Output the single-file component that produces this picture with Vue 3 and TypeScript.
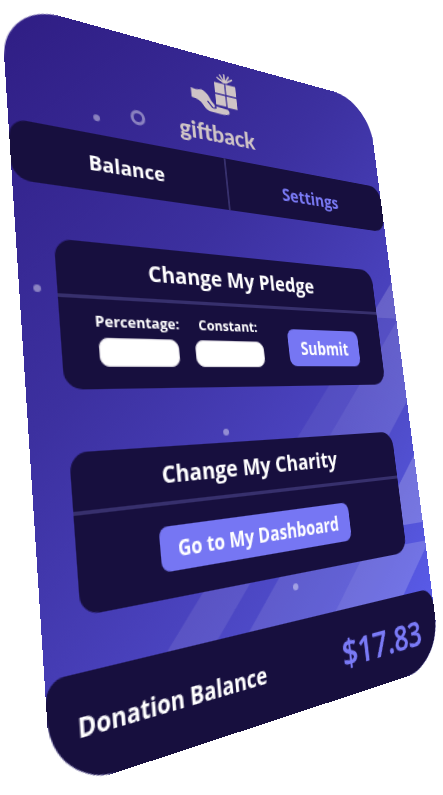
<script setup lang="ts">
import { ref } from 'vue'

type Tab = 'Balance' | 'Settings'

const tabs: Tab[] = ['Balance', 'Settings']
const current = ref<Tab>('Balance')
const percentage = ref('')
const constant = ref('')
const balance = ref(17.83)
</script>

<template>
  <div class="stage">
    <main class="card">
      <svg class="scenery" viewBox="0 0 400 606" preserveAspectRatio="none" aria-hidden="true">
        <defs>
          <linearGradient id="ray" x1="1" y1="0" x2="0" y2="1">
            <stop offset="0" stop-color="#fff" stop-opacity="0.14" />
            <stop offset="1" stop-color="#fff" stop-opacity="0.08" />
          </linearGradient>
        </defs>
        <path d="M400 208 V248 H363 Z" fill="#fff" fill-opacity="0.17" />
        <path d="M363 248 H400 V251 L197 466 H158 Z" fill="#fff" fill-opacity="0.06" />
        <path d="M400 251 V337 L279 466 H197 Z" fill="url(#ray)" />
        <path d="M158 466 H205 L131 545 H84 Z" fill="#fff" fill-opacity="0.09" />
        <path d="M236 466 H332 L258 545 H162 Z" fill="#fff" fill-opacity="0.1" />
        <path d="M400 394 V463 H335 Z" fill="#fff" fill-opacity="0.2" />
        <path d="M317 482 H400 V488 L346 545 H258 Z" fill="#fff" fill-opacity="0.17" />
        <g fill="#fff" fill-opacity="0.42">
          <circle cx="75" cy="86" r="3" />
          <circle cx="14" cy="239" r="3" />
          <circle cx="173" cy="359" r="3" />
          <circle cx="230" cy="501" r="3" />
        </g>
        <circle cx="114" cy="78" r="5.5" fill="none" stroke="#fff" stroke-opacity="0.42" stroke-width="3" />
      </svg>

      <header class="brand">
        <svg class="mark" viewBox="0 0 52 44" aria-hidden="true">
          <g fill="#cfc4c6">
            <path d="M27 11.5h11.300v10.800H27zM39.700 11.5h11.300v10.800H39.700zM27 23.700h11.300v10.800H27zM39.700 23.700h11.300v11.500H39.700z" />
            <path d="M0.500 23 Q7 24.500 12 22.500 Q17 24 19.500 28 Q21 32 25 35.500 Q26 38 23.500 38.500 L18 32.500 L17 33.500 L22 39 Q24 40 27 38.500 L27 36.500 Q33 37 40 37.500 Q42 39 41 41.500 Q39 43.500 31 43.500 L19 43 Q15 42 12 37.500 Q9 33 0.500 32.500 Z" />
          </g>
          <path d="M39 10 V1 M39 10 L34 2.500 M39 10 L44.500 2.500 M38 10 L30.500 6 M40 10 L48 5" fill="none" stroke="#cfc4c6" stroke-width="1.700" />
        </svg>
        <span class="name">giftback</span>
      </header>

      <nav class="tabs">
        <button
          v-for="tab in tabs"
          :key="tab"
          type="button"
          class="tab"
          :class="{ active: tab === current }"
          @click="current = tab"
        >
          {{ tab }}
        </button>
      </nav>

      <section class="panel pledge">
        <h2>Change My Pledge</h2>
        <form class="body" @submit.prevent>
          <div class="field">
            <label for="percentage">Percentage:</label>
            <input id="percentage" v-model="percentage" type="text" />
          </div>
          <div class="field">
            <label for="constant">Constant:</label>
            <input id="constant" v-model="constant" type="text" />
          </div>
          <button type="submit" class="action submit">Submit</button>
        </form>
      </section>

      <section class="panel charity">
        <h2>Change My Charity</h2>
        <div class="body">
          <button type="button" class="action dashboard">Go to My Dashboard</button>
        </div>
      </section>

      <footer class="total">
        <span class="caption">Donation Balance</span>
        <strong class="amount">${{ balance.toFixed(2) }}</strong>
      </footer>
    </main>
  </div>
</template>

<style>
body {
  margin: 0;
  background: #fff;
}
</style>

<style scoped>
.stage {
  min-height: 100vh;
  overflow: hidden;
}

.card {
  position: relative;
  box-sizing: border-box;
  display: flex;
  flex-direction: column;
  width: 100%;
  max-width: 400px;
  overflow: hidden;
  border-radius: 50px;
  background: linear-gradient(135deg, #2f1d83 0%, #3c309f 35%, #4840ba 58%, #504ecd 76%, #585ae6 92%);
  color: #fff;
  font-family: "Open Sans", "Noto Sans", sans-serif;
  font-weight: 700;
  transform-origin: 0 0;
  transform: matrix3d(
    1.26525, 0.34825, 0, 0.00094375,
    0.073597, 1.14142, 0, -0.00021271,
    0, 0, 1, 0,
    0.5, -0.3, 0, 1
  );
}

.scenery {
  position: absolute;
  inset: 0;
  width: 100%;
  height: 100%;
}

.brand,
.tabs,
.panel,
.total {
  position: relative;
}

.brand {
  display: flex;
  flex-direction: column;
  align-items: center;
  box-sizing: border-box;
  height: 101px;
  padding: 13px 6px 0 0;
}

.mark {
  width: 52px;
  height: 44px;
}

.name {
  color: #cfc4c6;
  font-family: Lato, sans-serif;
  font-size: 23px;
  font-weight: 900;
  line-height: 40px;
}

.tabs {
  display: grid;
  grid-template-columns: 1fr 1fr;
  height: 51px;
  overflow: hidden;
  border-radius: 15px;
  background: #170f3e;
}

button {
  margin: 0;
  border: 0;
  font: inherit;
  cursor: pointer;
}

.tab {
  padding: 0;
  background: none;
  color: #7a7af6;
  font-size: 18px;
}

.tab.active {
  color: #fff;
}

.tab + .tab {
  border-left: 2px solid #37306d;
}

.panel {
  margin: 0 28px 0 30px;
  border-radius: 15px;
  background: #170f3e;
}

.pledge {
  margin-top: 45px;
}

.charity {
  margin-top: 49px;
  margin-bottom: 40px;
}

h2 {
  margin: 0;
  border-bottom: 3px solid #37306d;
  font-size: 20px;
  font-weight: 700;
  line-height: 45px;
  text-align: center;
}

.body {
  display: flex;
  align-items: center;
  justify-content: center;
  height: 74px;
}

.field {
  display: flex;
  flex-direction: column;
  align-items: center;
  gap: 4px;
  width: 73px;
  margin: 0 16px 10px 0;
}

label {
  font-size: 13px;
  line-height: 19px;
}

input {
  box-sizing: border-box;
  width: 100%;
  height: 24px;
  padding: 0 6px;
  border: 1px solid #d8d5de;
  border-radius: 8px;
  background: #fff;
  font: inherit;
  font-size: 14px;
}

.action {
  height: 36px;
  padding: 0 14px;
  border-radius: 8px;
  background: #7676f3;
  color: #fff;
  font-size: 17px;
}

.submit {
  margin-left: 13px;
}

.dashboard {
  margin-bottom: 4px;
  padding: 0 14px 0 16px;
}

.total {
  display: flex;
  align-items: center;
  justify-content: space-between;
  height: 76px;
  padding: 0 22px;
  border-radius: 15px 15px 0 0;
  background: #170f3e;
}

.caption {
  font-size: 19px;
}

.amount {
  color: #7a7af6;
  font-size: 33px;
  font-weight: 600;
  text-shadow: 0 0 1px currentColor;
}
</style>
